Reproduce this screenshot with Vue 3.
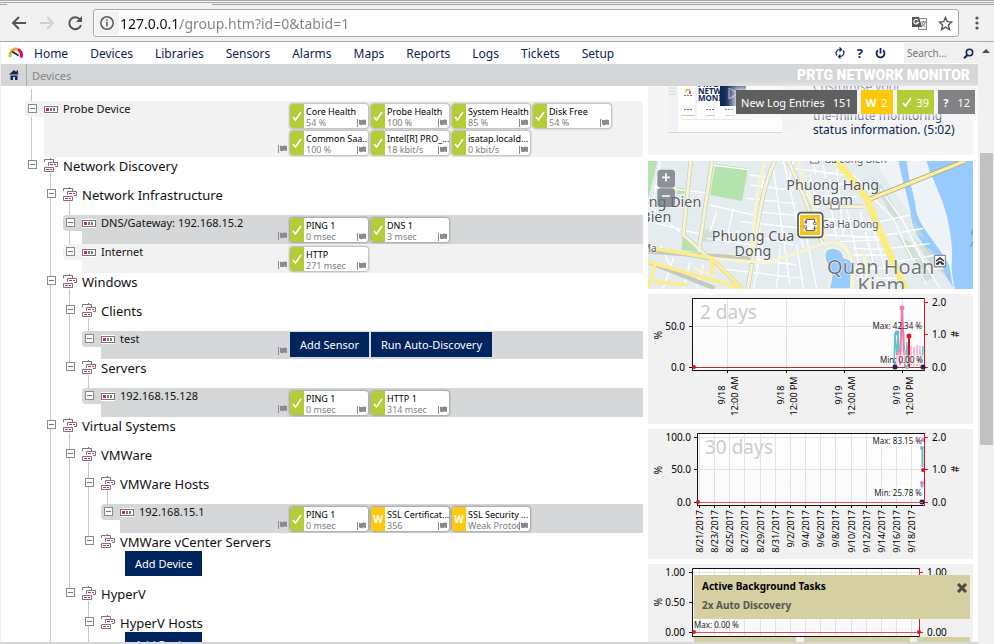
<script setup>
const nav = ['Home', 'Devices', 'Libraries', 'Sensors', 'Alarms', 'Maps', 'Reports', 'Logs', 'Tickets', 'Setup']

const ok = (name, value) => ({ name, value, state: 'ok' })
const warn = (name, value) => ({ name, value, state: 'warn' })

// `through` lists the depths whose guide line runs past the row,
// `last` marks the final child of its parent, `open` a row with children below.
const rows = [
  {
    label: 'Probe Device', depth: 0, device: true, through: [0],
    sensors: [
      ok('Core Health', '54 %'), ok('Probe Health', '100 %'), ok('System Health', '85 %'), ok('Disk Free', '54 %'),
      ok('Common Saa...', '100 %'), ok('Intel[R] PRO_...', '18 kbit/s'), ok('isatap.locald...', '0 kbit/s'),
    ],
  },
  { label: 'Network Discovery', depth: 0, last: true, open: true, through: [] },
  { label: 'Network Infrastructure', depth: 1, open: true, through: [1] },
  { label: 'DNS/Gateway: 192.168.15.2', depth: 2, device: true, dark: true, through: [1, 2], sensors: [ok('PING 1', '0 msec'), ok('DNS 1', '3 msec')] },
  { label: 'Internet', depth: 2, device: true, last: true, through: [1], sensors: [ok('HTTP', '271 msec')] },
  { label: 'Windows', depth: 1, open: true, through: [1] },
  { label: 'Clients', depth: 2, open: true, through: [1, 2] },
  { label: 'test', depth: 3, device: true, dark: true, last: true, through: [1, 2], actions: ['Add Sensor', 'Run Auto-Discovery'] },
  { label: 'Servers', depth: 2, open: true, last: true, through: [1] },
  { label: '192.168.15.128', depth: 3, device: true, dark: true, last: true, through: [1], sensors: [ok('PING 1', '0 msec'), ok('HTTP 1', '314 msec')] },
  { label: 'Virtual Systems', depth: 1, open: true, through: [1] },
  { label: 'VMWare', depth: 2, open: true, through: [1, 2] },
  { label: 'VMWare Hosts', depth: 3, open: true, through: [1, 2, 3] },
  {
    label: '192.168.15.1', depth: 4, device: true, dark: true, last: true, through: [1, 2, 3],
    sensors: [ok('PING 1', '0 msec'), warn('SSL Certificat...', '356'), warn('SSL Security ...', 'Weak Protoc')],
  },
  { label: 'VMWare vCenter Servers', depth: 3, last: true, through: [1, 2], below: 'Add Device' },
  { label: 'HyperV', depth: 2, last: true, open: true, through: [1] },
  { label: 'HyperV Hosts', depth: 3, through: [1, 3], below: 'Add Device' },
]

function guide(row, d) {
  if (row.through.includes(d)) return 'line-full'
  if (d === row.depth && row.last) return 'line-top'
  return ''
}

const days2 = [
  { x: 79, a: '9/18', b: '12:00 AM' },
  { x: 138, a: '9/18', b: '12:00 PM' },
  { x: 196, a: '9/19', b: '12:00 AM' },
  { x: 254, a: '9/19', b: '12:00 PM' },
]
const days30 = [
  '8/21/2017', '8/23/2017', '8/25/2017', '8/27/2017', '8/29/2017', '8/31/2017', '9/2/2017', '9/4/2017',
  '9/6/2017', '9/8/2017', '9/10/2017', '9/12/2017', '9/14/2017', '9/16/2017', '9/18/2017',
].map((t, i) => ({ t, x: Math.round(51 + i * 15.15) }))
</script>

<template>
  <div class="window">
    <header class="chrome">
      <div class="tabs"><i class="edge left"></i><i class="edge right"></i></div>
      <div class="toolbar">
        <button class="tool" aria-label="Back">
          <svg width="16" height="16" viewBox="0 0 16 16"><path d="M15 8H2M8 2L2 8l6 6" fill="none" stroke="#555" stroke-width="2" /></svg>
        </button>
        <button class="tool" aria-label="Forward">
          <svg width="16" height="16" viewBox="0 0 16 16"><path d="M1 8h13M8 2l6 6-6 6" fill="none" stroke="#d0d0d0" stroke-width="2" /></svg>
        </button>
        <button class="tool" aria-label="Reload">
          <svg width="16" height="16" viewBox="0 0 16 16"><path d="M13 4.5A6 6 0 1 0 14 10" fill="none" stroke="#555" stroke-width="2" /><path d="M15 1v6H9z" fill="#555" /></svg>
        </button>
        <div class="omnibox">
          <span class="info">
            <svg width="16" height="16" viewBox="0 0 16 16"><circle cx="8" cy="8" r="6.2" fill="none" stroke="#5a5a5a" stroke-width="1.5" /><path d="M8 7v4.5M8 4.2v1.6" stroke="#5a5a5a" stroke-width="1.6" /></svg>
          </span>
          <input class="url" type="text" aria-label="Address" value="127.0.0.1/group.htm?id=0&amp;tabid=1" />
          <svg class="translate" width="15" height="14" viewBox="0 0 15 14">
            <rect x="6.500" y="2.500" width="8" height="11" fill="#f4f4f4" stroke="#8a8a8a" />
            <path d="M0 1h7l3 10H0z" fill="#555" />
            <path d="M6 4.200A2.300 2.300 0 1 0 6.400 6.200H4.300" fill="none" stroke="#fff" stroke-width="1.100" />
            <path d="M9 6h5M11.500 5v1M13 6.500c-.5 2-2 3.500-3.500 4.500M10 7c.8 2 2 3 3.500 4" fill="none" stroke="#777" />
          </svg>
          <button class="tool" aria-label="Bookmark">
            <svg width="15" height="15" viewBox="0 0 16 16"><path d="M8 1.500l1.900 4.500 4.800.4-3.600 3.200 1.100 4.800L8 11.800l-4.200 2.600 1.100-4.800L1.300 6.400l4.800-.4z" fill="none" stroke="#555" stroke-width="1.500" /></svg>
          </button>
        </div>
        <button class="tool menu" aria-label="Menu">
          <svg width="4" height="14" viewBox="0 0 4 14" fill="#555"><circle cx="2" cy="2" r="1.600" /><circle cx="2" cy="7" r="1.600" /><circle cx="2" cy="12" r="1.600" /></svg>
        </button>
      </div>
    </header>

    <div class="viewport">
      <div class="page">
        <nav class="mainnav">
          <svg class="logo" width="16" height="12" viewBox="0 0 16 12" fill="none" stroke-width="3">
            <path d="M2.500 10A5.500 5.500 0 0 1 3.500 4.500" stroke="#b4cc38" />
            <path d="M3 5A6 6 0 0 1 10 2.500" stroke="#f7a823" />
            <path d="M10 2.500A6 6 0 0 1 13 10.500" stroke="#e6005c" />
            <path d="M4 4.500l6.500 4" stroke="#12265a" stroke-width="1.500" />
          </svg>
          <a v-for="n in nav" :key="n" href="#">{{ n }}</a>
          <div class="navtools">
            <button class="tool" aria-label="Refresh">
              <svg width="10" height="12" viewBox="0 0 10 12" fill="none" stroke="#12265a" stroke-width="1.200"><path d="M2 8.500A3.600 3.600 0 0 1 4.500 2.500H6.500M4.500 .5l2 2-2 2M8 3.500A3.600 3.600 0 0 1 5.500 9.500H3.500M5.500 7.500l-2 2 2 2" /></svg>
            </button>
            <button class="tool help" aria-label="Help">?</button>
            <button class="tool" aria-label="Log out">
              <svg width="11" height="11" viewBox="0 0 11 11" fill="none" stroke="#12265a" stroke-width="1.800"><path d="M3 2.200A4 4 0 1 0 8 2.200M5.500 0v5.500" /></svg>
            </button>
            <label class="search">
              <input type="text" aria-label="Search" placeholder="Search..." />
              <svg width="11" height="11" viewBox="0 0 11 11" fill="none" stroke="#12265a"><circle cx="6.500" cy="4.500" r="3.200" stroke-width="1.600" /><path d="M4.500 7L1 10.200" stroke-width="2.200" /></svg>
            </label>
          </div>
        </nav>
        <div class="crumbs">
          <a class="home" href="#" aria-label="Home">
            <svg width="10" height="10" viewBox="0 0 10 10" fill="#12265a"><path d="M5 0l5 4.500H0zM7.500 .5H9V3H7.500zM1.500 5.500h7V10H6V7H4v3H1.500z" /></svg>
          </a>
          <a class="crumb" href="#">Devices</a>
          <span class="brand">PRTG NETWORK MONITOR</span>
        </div>

        <div class="content">
          <main class="tree">
            <div class="lead"></div>
            <div v-for="(row, i) in rows" :key="i" class="row" :class="{ device: row.device, dark: row.dark, flat: row.actions, tall: row.below && row.last }">
              <span v-for="d in row.depth" :key="d" class="cell" :class="guide(row, d - 1)"></span>
              <span class="cell" :class="guide(row, row.depth)">
                <span class="tab"><button class="expander" aria-label="Collapse"></button></span>
              </span>
              <div class="body">
                <div class="icon" :class="{ 'line-under': row.open }">
                  <svg v-if="row.device" width="14" height="9" viewBox="0 0 14 9"><path d="M0 0h14v9H0z" fill="#fff" /><rect x=".5" y="1.500" width="13" height="6" fill="#fff" stroke="#777" /><path d="M2 3h3v3H2z" fill="#e6195e" /><path d="M6 3h2v3H6zM9 3h2v3H9z" fill="#777" /></svg>
                  <svg v-else width="14" height="14" viewBox="0 0 14 14" fill="none" stroke="#777"><path d="M0.500 4V1.500h9V4M6.500 0v1" /><path d="M4.500 8V4.500h9v4H11" fill="#fff" /><path d="M.5 9.500h9v4h-9z" fill="#fff" /><path d="M6 6.500h3M2 11.500h3" stroke="#e6195e" /><path d="M10 6.500h2M6 11.500h2" stroke="#e6195e" /></svg>
                </div>
                <div class="name">
                  <a href="#">{{ row.label }}</a>
                  <button v-if="row.below" class="action">{{ row.below }}</button>
                </div>
                <template v-if="row.device">
                  <svg class="flag" width="9" height="8" viewBox="0 0 9 8"><path d="M0 0h1v8H0zM2 .5l2 .7 2.500-.7L9 1v5l-2.500-.5L4 6.200 2 5.500z" fill="#8a8a8c" /></svg>
                  <div v-if="row.actions" class="actions">
                    <button v-for="a in row.actions" :key="a" class="action">{{ a }}</button>
                  </div>
                  <div v-else class="sensors">
                    <a v-for="s in row.sensors" :key="s.name" class="sensor" href="#">
                      <span class="state" :class="s.state">
                        <svg v-if="s.state === 'ok'" width="10" height="10" viewBox="0 0 10 10"><path d="M1 6l2.500 3L9 1" fill="none" stroke="#fff" stroke-width="1.600" /></svg>
                        <b v-else>W</b>
                      </span>
                      <span class="reading">
                        <span class="sname">{{ s.name }}</span>
                        <span class="sval"><span class="val">{{ s.value }}</span><svg width="9" height="8" viewBox="0 0 9 8"><path d="M0 0h1v8H0zM2 .5l2 .7 2.500-.7L9 1v5l-2.500-.5L4 6.200 2 5.500z" fill="#8a8a8c" /></svg></span>
                      </span>
                    </a>
                  </div>
                </template>
              </div>
            </div>
          </main>

          <aside class="side">
            <section class="promo">
              <svg class="thumb" width="130" height="47" viewBox="0 0 130 47">
                <path d="M0 0h130v47H0z" fill="#fefefe" /><path d="M0 0h10v47H0z" fill="#f1f2f4" /><path d="M1 2h7M1 5h6M1 8h7M1 46.500h129" stroke="#d5d6da" />
                <path d="M114 0h16v47h-16z" fill="#f3f3f4" />
                <path d="M13 33.500h70M28 0v34M46 18v16M66 18v16" stroke="#e7e8ea" />
                <path d="M18 6a2 2 0 0 1 4-1" stroke="#f7a823" fill="none" stroke-width="1.500" /><path d="M22 5v3" stroke="#e6195e" stroke-width="1.500" />
                <path d="M16 9.500h8M16 23.500h8M38 23.500h8M57 23.500h8" stroke="#777" stroke-dasharray="2 1" />
                <path d="M13 29.500h14M38 29.500h8M58 29.500h8" stroke="#d8cc9a" />
                <g class="poster"><text x="30" y="1">PRTG</text><text x="30" y="8">NETWORK</text><text x="30" y="15">MONITOR</text></g>
                <path d="M52 0h26v20H52z" fill="#10265c" /><path d="M61 2l9 5.500-9 5.500z" fill="none" stroke="#aab4cc" />
              </svg>
              <div class="blurb"><span>Customise your</span><span class="after">the-minute monitoring</span><span>status information. (5:02)</span></div>
            </section>

            <section class="map">
              <svg width="100%" viewBox="24 18 975 384" preserveAspectRatio="xMidYMid slice">
                <rect x="24" y="18" width="975" height="384" fill="#e5ecf0" />
                <path d="M700 18H1000V402H940C930 330 860 260 820 190z" fill="#eef3f8" />
                <path d="M860 18C880 90 915 130 930 230S925 320 945 402H1000V18z" fill="#97cbff" />
                <path d="M776 18h24c5 60 20 90 26 130 0 60 70 120 100 180 8 30 8 50 14 70l-26-40c-40-60-90-110-100-170-8-60-26-100-38-170z" fill="#97cbff" />
                <g fill="#b5e3ae"><path d="M24 18h28L26 125H24zM226 26l98 14-18 98-96-18zM128 240l46 52-50-8zM110 100h24v16h-24z" /></g>
                <g fill="#c9dccb"><path d="M700 80l24 10 60 100-20 10zM770 240l40 20 70 110-30 10zM810 150l14 50 30 50-24-10zM190 220l36 6-6 36-34-4zM820 250l60 40 40 70-40-20z" opacity=".7" /></g>
                <g fill="none" stroke="#fff" stroke-width="4">
                  <path d="M24 150L130 240M60 18L40 140M40 95l170 20M30 200l160 40M210 150l130 30M230 170l-20 60M280 160l-24 110M200 250l140 20M330 60l50 6M330 90l130 16M320 130l150 16M340 170l140 12M300 200l190 20M290 230l170 40M270 300l200 30M230 340l260 30M100 310l-30 90M150 320l-20 80M190 330l-20 70M60 270l30 60M400 40l50 350M430 18l60 260M370 60l-20 300M455 40l170 20M470 80l180 10M490 120l160 6M510 60l40 180M550 30l40 220M590 40l20 200M540 190l150 10M560 215l140 10M560 240l160 8M600 260l140-6M640 280l110 4M620 160l50 230M660 170l60 230M690 190l60 200M700 130l60 60 40 90 60 110M720 100l70 100 60 120 50 80M720 200l90-20M740 240l110-20M750 280l120-14M770 320l120-20M790 350l120-10M500 250l30 150M470 270l20 130M640 300h110M640 340h130M650 370h150M370 260l-30 140M420 280l-10 120M460 18l-20 90M640 60l60 60M520 18l6 40M215 30l110 14" />
                </g>
                <g fill="none" stroke="#c6cbb9" stroke-width="13"><path d="M152 18L130 240M216 18L176 290M405 18C350 130 350 280 322 402M445 18C500 130 520 210 550 270M24 280l190 30 90 90M130 240l90 80M24 320l200 80M560 155h110M330 310L24 290" /></g>
                <g fill="none" stroke="#f7f4d0" stroke-width="9">
                  <path d="M152 18L130 240M216 18L176 290M405 18C350 130 350 280 322 402M376 18C340 120 350 200 330 300M445 18C500 130 520 210 550 270M475 18C490 100 530 160 555 250M130 240l90 80M215 310l170 14 170-60M560 155h110M550 270c50-20 80 0 90 80v52M670 290l20 110M160 340l60 20" />
                </g>
                <g fill="none" stroke="#fbec8e" stroke-width="11"><path d="M24 278l190 30 90 92M24 320l280 80M215 310v50M40 380l100 10M24 400l24-80" /></g>
                <path d="M690 132L975 18" stroke="#a9a37d" stroke-width="15" /><path d="M686 134L975 18" stroke="#fbf0a0" stroke-width="10" />
                <path d="M585 10L680 130C710 210 745 290 800 410" fill="none" stroke="#fbec7c" stroke-width="20" />
                <path d="M558 285c20-14 50-4 54 22 10 8 22 0 24 16l-4 80h-66c6-30 18-50-4-72-8-14-12-32-4-46z" fill="#97cbff" stroke="#f7f4d0" stroke-width="6" />
                <g fill="#fff" stroke="#777" stroke-width="3"><rect x="884" y="301" width="32" height="34" /><rect x="573" y="140" width="24" height="22" /><rect x="512" y="10" width="24" height="14" /></g>
                <g class="place" text-anchor="middle"><text x="578" y="105">Phuong Hang</text><text x="578" y="150">Buom</text><text x="339" y="258">Phuong Cua</text><text x="339" y="303">Dong</text><text x="92" y="155">ong Dien</text><text x="49" y="200">Bien</text></g>
                <g class="minor"><text x="545" y="219">Ga Ha Dong</text><text x="552" y="23">Ga Long Bien</text><text x="6" y="291">Ma</text></g>
                <g class="district" text-anchor="middle"><text x="722" y="356">Quan Hoan</text><text x="724" y="411">Kiem</text></g>
                <path d="M992 225l6 4-4 12M992 276l6-16" fill="none" stroke="#4e86c8" stroke-width="3" />
                <path d="M888 316l12-10 12 10v4l-12-7-12 7zM888 329v-4l6-4v-2h12v2l6 4v4h-9v-4h-6v4z" fill="#333" />
                <g fill="#6d7378" opacity=".75"><rect x="52" y="44" width="53" height="54" rx="10" /><rect x="52" y="100" width="53" height="56" rx="10" /></g>
                <path d="M66 67h24M78 55v24M66 123h24" stroke="#fff" stroke-width="5" />
                <rect x="474" y="173" width="74" height="74" rx="10" fill="#fff" stroke="#555" stroke-width="5" /><rect x="480" y="180" width="61" height="60" fill="#f9c513" />
                <rect x="491" y="191" width="39" height="38" fill="#fff" /><path d="M498 206v-13h26v9M524 214v13h-26v-9" fill="none" stroke="#555" stroke-width="3" />
                <path d="M491 201h10M496 196v10M520 202h8v7h-8zM518 220h12M524 215v10M492 212h8v7h-8z" fill="none" stroke="#555" stroke-width="2" />
              </svg>
            </section>

            <section class="chart">
              <svg width="100%" viewBox="0 0 325 130">
                <defs><linearGradient id="plot" x1="0" y1="0" x2="0" y2="1"><stop offset="0" stop-color="#fff" /><stop offset="1" stop-color="#fafafa" /></linearGradient></defs>
                <rect x="44.500" y="4.500" width="232" height="72" fill="url(#plot)" />
                <path d="M45 32.500h231M79.500 5v71M138.500 5v71M196.500 5v71M254.500 5v71" stroke="#e2e2e2" />
                <text x="52" y="25" class="big">2 days</text>
                <path d="M246 73l1-34 2 26 1-26 2 30M258 70l1-22 1 25M274 68l1-16" fill="none" stroke="#5fc4c4" stroke-width="1.500" />
                <path d="M247 73l3-16 2 14 2-57 2 40 1 19" fill="none" stroke="#f277ae" stroke-width="2" /><path d="M248 72l3-14 3 10 3-12 2 14M263 72V52M266 72V53M269 72V51M272 72V52" fill="none" stroke="#f6a8ca" stroke-width="1.500" />
                <path d="M261 73V42" stroke="#d8171f" stroke-width="2" />
                <circle cx="249" cy="39" r="2.500" fill="#5fc4c4" /><circle cx="254" cy="14" r="2.500" fill="#f277ae" /><circle cx="261" cy="42" r="2.500" fill="#d8171f" />
                <text x="274" y="35" text-anchor="end" class="tiny">Max: 42.34 %</text>
                <rect x="247" y="61" width="28" height="9" fill="#fff" opacity=".5" /><text x="275" y="69" text-anchor="end" class="tiny">Min: 0.00 %</text>
                <path d="M44.500 77V4.500H276M44 76.500h233" fill="none" stroke="#111" /><path d="M276.500 4v73M277 8.500h3M277 40.500h3M277 73.500h3" stroke="#d8171f" />
                <path d="M41 32.500h3M41 73.500h3M79.500 77v2M138.500 77v2M196.500 77v2M254.500 77v2" stroke="#111" />
                <path d="M45 73.500h230" stroke="#b33038" /><circle cx="46" cy="73" r="2" fill="#d8171f" /><circle cx="247" cy="73" r="2.500" fill="#12265a" /><circle cx="259" cy="73" r="2" fill="#5fc4c4" /><circle cx="275" cy="73" r="2.500" fill="#12265a" />
                <g class="axis"><g text-anchor="end"><text x="37" y="36">50.0</text><text x="37" y="77">0.0</text></g><text x="284" y="12">2.0</text><text x="284" y="44">1.0</text><text x="284" y="77">0.0</text>
                  <text transform="translate(14 41) rotate(-90)" text-anchor="middle">%</text><text transform="translate(311 40) rotate(-90)" text-anchor="middle">#</text>
                  <g v-for="d in days2" :key="d.x" class="dates" text-anchor="middle"><text :transform="`translate(${d.x - 2} 101) rotate(-90)`">{{ d.a }}</text><text :transform="`translate(${d.x + 11} 102) rotate(-90)`">{{ d.b }}</text></g>
                </g>
              </svg>
            </section>

            <section class="chart">
              <svg width="100%" viewBox="0 0 325 130">
                <rect x="49.500" y="4.500" width="227" height="72" fill="url(#plot)" />
                <path d="M50 8.500h226M50 40.500h226" stroke="#e2e2e2" /><path v-for="d in days30" :key="d.t" :d="`M${d.x + 0.5} 5v71`" stroke="#e2e2e2" />
                <text x="57" y="25" class="big">30 days</text>
                <rect x="225" y="6" width="49" height="11" fill="#fff" opacity=".8" /><rect x="227" y="58" width="47" height="11" fill="#fff" opacity=".8" />
                <text x="274" y="15" text-anchor="end" class="tiny">Max: 83.15 %</text><text x="274" y="67" text-anchor="end" class="tiny">Min: 25.78 %</text>
                <path d="M274.500 20v18" stroke="#5fc4c4" stroke-width="2" /><circle cx="275" cy="11" r="2" fill="#f277ae" /><circle cx="274" cy="19" r="2" fill="#5fc4c4" /><circle cx="274" cy="54" r="2" fill="#f277ae" /><circle cx="274" cy="57" r="1.500" fill="#5fc4c4" /><circle cx="274" cy="73" r="2.500" fill="#12265a" />
                <path d="M49.500 77V4.500H276M49 76.500h228" fill="none" stroke="#111" /><path d="M276.500 4v73M277 8.500h3M277 40.500h3M277 73.500h3" stroke="#d8171f" />
                <path d="M46 8.500h3M46 40.500h3M46 73.500h3" stroke="#111" /><path v-for="d in days30" :key="d.t" :d="`M${d.x + 0.5} 77v2`" stroke="#111" />
                <path d="M50 73.500h225" stroke="#e0545a" /><circle cx="50" cy="73" r="2" fill="#d8171f" /><circle cx="275" cy="41" r="2" fill="#d8171f" />
                <g class="axis"><g text-anchor="end"><text x="43" y="12">100.0</text><text x="43" y="44">50.0</text><text x="43" y="77">0.0</text></g><text x="284" y="12">2.0</text><text x="284" y="44">1.0</text><text x="284" y="77">0.0</text>
                  <text transform="translate(14 41) rotate(-90)" text-anchor="middle">%</text><text transform="translate(311 40) rotate(-90)" text-anchor="middle">#</text>
                  <g class="dates" text-anchor="end"><text v-for="d in days30" :key="d.t" :transform="`translate(${d.x + 4} 81) rotate(-90)`">{{ d.t }}</text></g>
                </g>
              </svg>
            </section>

            <section class="chart">
              <svg width="100%" viewBox="0 0 325 130">
                <rect x="44.500" y="4.500" width="227" height="68" fill="url(#plot)" />
                <path d="M45 8.500h226M45 38.500h226" stroke="#e2e2e2" /><path v-for="d in days30" :key="d.t" :d="`M${d.x + 0.5} 5v67`" stroke="#e2e2e2" />
                <text x="46" y="64" class="tiny">Max: 0.00 %</text>
                <path d="M44.500 73V4.500H271M44 72.500h227" fill="none" stroke="#111" /><path d="M271.500 4v69M272 8.500h3M272 68.500h3" stroke="#d8171f" /><path d="M41 8.500h3M41 38.500h3M41 68.500h3" stroke="#111" />
                <path d="M45 68.500h226" stroke="#e0545a" /><circle cx="46" cy="68" r="2" fill="#d8171f" /><circle cx="271" cy="68" r="2" fill="#d8171f" />
                <g class="axis"><g text-anchor="end"><text x="37" y="12">1.00</text><text x="37" y="42">0.50</text><text x="37" y="72">0.00</text></g><text x="279" y="12">1.00</text><text x="279" y="72">0.00</text><text transform="translate(14 38) rotate(-90)" text-anchor="middle">%</text></g>
              </svg>
            </section>
          </aside>
        </div>

        <div class="alerts">
          <a class="alert log" href="#"><span>New Log Entries</span><span>151</span></a>
          <a class="alert warn" href="#"><b>W</b><span>2</span></a>
          <a class="alert ok" href="#"><svg width="10" height="10" viewBox="0 0 10 10"><path d="M1 6l2.500 3L9 1" fill="none" stroke="#fff" stroke-width="1.700" /></svg><span>39</span></a>
          <a class="alert unknown" href="#"><b>?</b><span>12</span></a>
        </div>

        <div class="tasks">
          <div class="popup">
            <div><h2>Active Background Tasks</h2><p>2x Auto Discovery</p></div>
            <button class="tool close" aria-label="Close"><svg width="10" height="10" viewBox="0 0 10 10"><path d="M1 1l8 8M9 1L1 9" stroke="#4a4a42" stroke-width="3" /></svg></button>
          </div>
          <div class="strips"><i class="a"></i><i class="b"></i><i class="c"></i></div>
        </div>
      </div>

      <div class="scrollbar"><svg width="8" height="4" viewBox="0 0 8 4"><path d="M0 4l4-4 4 4z" fill="#505050" /></svg><i class="thumbbar"></i></div>
    </div>
  </div>
</template>

<style>
body { margin: 0; background: #fff; }
</style>

<style scoped>
* { box-sizing: border-box; }
.window { height: 100vh; display: flex; flex-direction: column; overflow: hidden; font-family: "Noto Sans", "Open Sans", sans-serif; color: #111; }
a { color: inherit; text-decoration: none; }
button { font-family: inherit; border: 0; padding: 0; margin: 0; }
svg { display: block; flex: none; }
.tool { background: none; display: flex; align-items: center; justify-content: center; }

.chrome { background: #f1f1f1; border-bottom: 1px solid #a9a9a9; height: 42px; display: flex; flex-direction: column; }
.tabs { height: 5px; border-top: 1px solid #aaa6a6; background: linear-gradient(#f6f4f4 1px, #aaa6a6 1px, #aaa6a6 2px, #f1f1f1 2px); display: flex; justify-content: space-between; align-items: flex-end; }
.edge { height: 1px; background: #a5a1a4; }
.edge.left { width: 7px; }
.edge.right { width: calc(100% - 212px); }
.toolbar { flex: 1; display: flex; align-items: center; padding: 0 11px; gap: 12px; }
.omnibox { flex: 1; height: 28px; margin-left: -2px; border: 1px solid #a8a8a8; border-radius: 3px; background: #fff; display: flex; align-items: center; padding: 0 5px 0 0; }
.info { background: #f2f2f2; height: 24px; width: 24px; margin-left: 1px; display: flex; align-items: center; justify-content: center; }
.url { flex: 1; min-width: 0; border: 0; outline: 0; padding: 0 1px; font: 14px "Noto Sans", sans-serif; color: transparent; background: linear-gradient(90deg, #111 61px, #808080 61px); -webkit-background-clip: text; background-clip: text; }
.translate { margin-right: 11px; }
.menu { width: 12px; }

.viewport { flex: 1; min-height: 0; display: flex; }
.page { position: relative; flex: 1; min-width: 0; display: flex; flex-direction: column; border-left: 1px solid #f0f0f0; border-bottom: 2px solid #d5d7d8; overflow: hidden; }
.scrollbar { width: 16px; background: #f1f1f1; display: flex; flex-direction: column; align-items: center; padding-top: 7px; gap: 100px; }
.thumbbar { width: 13px; height: 49%; background: #c1c1c1; }

.mainnav { height: 22px; flex: none; display: flex; align-items: center; gap: 22px; padding-left: 7px; font-size: 12px; color: #0c2454; }
.logo { margin-right: -12px; }
.navtools { margin-left: auto; display: flex; align-items: center; gap: 12px; }
.help { font-weight: 700; font-size: 13px; color: #12265a; }
.search { margin-left: 6px; width: 74px; height: 20px; background: #f0f0f0; display: flex; align-items: center; padding: 0 4px 0 3px; }
.search input { flex: 1; min-width: 0; border: 0; background: none; padding: 0; outline: 0; font: 10px "Noto Sans", sans-serif; }
.search input::placeholder { color: #777; opacity: 1; }
.crumbs { height: 22px; flex: none; background: #d4d6d7; display: flex; align-items: center; font-size: 11px; color: #85878a; }
.home { width: 26px; height: 22px; border-right: 1px solid #aeb0b1; display: flex; align-items: center; justify-content: center; }
.crumb { padding-left: 5px; }
.brand { margin-left: auto; padding-right: 8px; font: 900 14px Roboto, sans-serif; color: #fff; }

.content { flex: 1; min-height: 0; display: flex; gap: 5px; padding-right: 5px; overflow: hidden; }
.tree { flex: 1; min-width: 0; padding-left: 24px; --line: #c6c7c8; }
.lead { height: 15px; background: linear-gradient(var(--line), var(--line)) 6px 3px / 1px 100% no-repeat; }
.row { display: flex; min-height: 29px; --bg: transparent; }
.row.tall { min-height: 52px; }
.row.flat { min-height: 28px; }
.device { --bg: #f2f2f2; }
.dark { --bg: #d5d7d8; }
.cell { width: 19px; flex: none; }
.line-full { background: linear-gradient(var(--line), var(--line)) 6px 0 / 1px 100% no-repeat; }
.line-top { background: linear-gradient(var(--line), var(--line)) 6px 0 / 1px 4px no-repeat; }
.tab { display: block; height: 16px; padding: 3px 0 0 3px; background: var(--bg); border-radius: 4px 0 0 4px; }
.expander { display: block; width: 9px; height: 9px; border: 1px solid #8a8b8d; background: linear-gradient(#777, #777) center / 5px 1px no-repeat #fff; }
.body { flex: 1; min-width: 0; display: flex; background: var(--bg); }
.icon { width: 19px; padding-top: 1px; flex: none; }
.device .icon { padding-top: 4px; }
.line-under { background: linear-gradient(var(--line), var(--line)) 6px 16px / 1px 100% no-repeat; }
.name { flex: 1; min-width: 0; font-size: 13px; line-height: 18px; white-space: nowrap; }
.name a { display: block; }
.device .name { font-size: 11px; line-height: 16px; }
.name .action { margin-left: 5px; }
.flag { align-self: flex-end; margin: 0 3px 4px 0; }
.sensors { width: 353px; flex: none; display: flex; flex-wrap: wrap; align-content: flex-start; gap: 3px; padding: 3px 0 2px; }
.actions { width: 353px; flex: none; display: flex; gap: 2px; padding: 1px 0 2px; }
.action { height: 25px; padding: 0 10px; background: #00245e; color: #fff; font-size: 11px; line-height: 25px; white-space: nowrap; }
.sensor { width: 78px; height: 24px; display: flex; background: #fff; border-radius: 3px; overflow: hidden; box-shadow: 0 0 2px 1px rgba(0, 0, 0, .25); font-size: 9px; line-height: 11px; }
.state { width: 14px; flex: none; display: flex; align-items: center; justify-content: center; color: #fff; font-size: 10px; }
.ok { background: #b4cc38; }
.warn { background: #ffc90a; }
.reading { flex: 1; min-width: 0; padding: 2px 0 0 2px; display: flex; flex-direction: column; white-space: nowrap; }
.sname { color: #000; }
.sval { display: flex; color: #808080; align-items: center; padding-right: 2px; }
.val { flex: 1; min-width: 0; overflow: hidden; }

.side { width: 325px; flex: none; display: flex; flex-direction: column; gap: 5px; }
.promo { height: 69px; flex: none; background: #f5f5f5; display: flex; padding-left: 20px; gap: 15px; overflow: hidden; }
.poster { font: 700 8px "Noto Sans", sans-serif; fill: #12265a; }
.blurb { margin-top: -6px; font-size: 12px; line-height: 14px; color: #0c2454; display: flex; flex-direction: column; white-space: nowrap; }
.after { margin-top: 15px; }
.map { height: 128px; flex: none; margin-top: 1px; overflow: hidden; }
.map svg { height: 100%; }
.map text { font-family: "Noto Sans", sans-serif; fill: #54565a; stroke: #fff; stroke-width: 3px; paint-order: stroke; }
.place { font-size: 43px; }
.minor { font-size: 30px; }
.district { font-size: 60px; }
.map .district text { fill: #74777b; }
.chart { background: #f1f1f1; flex: none; }
.chart text { font-family: "Noto Sans", sans-serif; }
.axis { font-size: 10px; fill: #000; }
.dates { font-size: 9px; }
.chart .tiny { font-size: 8px; fill: #222; }
.chart .big { font-size: 19px; fill: #ccc; }

.alerts { position: absolute; right: 3px; top: 48px; display: flex; gap: 4px; box-shadow: 0 0 8px 4px rgba(245, 245, 245, .9); background: #f5f5f5; }
.alert { height: 24px; display: flex; align-items: center; gap: 5px; padding: 0 5px; font-size: 11px; color: #fff; }
.log { background: #5f5f5f; gap: 8px; }
.unknown { background: #808284; gap: 9px; }
.tasks { position: absolute; right: 8px; bottom: 0; width: 276px; }
.popup { display: flex; justify-content: space-between; height: 44px; padding: 3px 3px 0 8px; background: #d6cfa2; }
.popup h2, .popup p { margin: 0; font-size: 10px; line-height: 16px; font-weight: 700; color: #000; }
.popup p { color: #55564c; margin-top: 3px; }
.close { height: 20px; width: 11px; }
.strips { display: flex; justify-content: space-between; margin-top: 18px; }
.strips i { height: 5px; background: #d6cfa2; }
.a { width: 102px; }
.b { width: 106px; }
.c { width: 53px; }
</style>
